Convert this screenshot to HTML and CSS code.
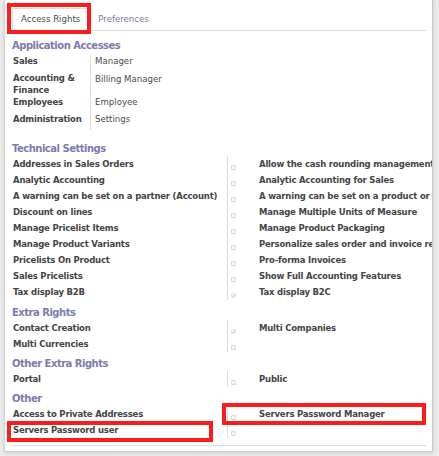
FILE: index.html
```html
<!DOCTYPE html>
<html>
<head>
<meta charset="utf-8">
<title>Access Rights</title>
<link rel="stylesheet" href="styles.css">
</head>
<body>
<div class="sheet">
  <div class="notebook">
    <ul class="tabs">
      <li class="tab active">Access Rights</li>
      <li class="tab">Preferences</li>
    </ul>
    <div class="pane">
      <div class="sep-title app-title">Application Accesses</div>
      <div class="app-group">
        <div class="app-row"><div class="app-label">Sales</div><div class="app-value">Manager</div></div>
        <div class="app-row tight"><div class="app-label">Accounting &amp; Finance</div><div class="app-value shifted">Billing Manager</div></div>
        <div class="app-row"><div class="app-label">Employees</div><div class="app-value">Employee</div></div>
        <div class="app-row"><div class="app-label">Administration</div><div class="app-value">Settings</div></div>
      </div>

      <div class="sep-title tech-title">Technical Settings</div>
      <div class="groups">
        <div class="group left">
          <div class="row"><div class="lbl">Addresses in Sales Orders</div><div class="fld"><span class="chk"></span></div></div>
          <div class="row"><div class="lbl">Analytic Accounting</div><div class="fld"><span class="chk"></span></div></div>
          <div class="row"><div class="lbl">A warning can be set on a partner (Account)</div><div class="fld"><span class="chk"></span></div></div>
          <div class="row"><div class="lbl">Discount on lines</div><div class="fld"><span class="chk"></span></div></div>
          <div class="row"><div class="lbl">Manage Pricelist Items</div><div class="fld"><span class="chk"></span></div></div>
          <div class="row"><div class="lbl">Manage Product Variants</div><div class="fld"><span class="chk"></span></div></div>
          <div class="row"><div class="lbl">Pricelists On Product</div><div class="fld"><span class="chk"></span></div></div>
          <div class="row"><div class="lbl">Sales Pricelists</div><div class="fld"><span class="chk"></span></div></div>
          <div class="row"><div class="lbl">Tax display B2B</div><div class="fld"><span class="chk checked"><svg viewBox="0 0 5 5" width="5" height="5"><polyline points="1,2.6 2.1,3.7 4,1.3" fill="none" stroke="#b5b5b5" stroke-width="0.9"/></svg></span></div></div>
        </div>
        <div class="group right">
          <div class="row"><div class="lbl">Allow the cash rounding management</div><div class="fld"><span class="chk"></span></div></div>
          <div class="row"><div class="lbl">Analytic Accounting for Sales</div><div class="fld"><span class="chk"></span></div></div>
          <div class="row"><div class="lbl">A warning can be set on a product or a customer (Stock)</div><div class="fld"><span class="chk"></span></div></div>
          <div class="row"><div class="lbl">Manage Multiple Units of Measure</div><div class="fld"><span class="chk"></span></div></div>
          <div class="row"><div class="lbl">Manage Product Packaging</div><div class="fld"><span class="chk"></span></div></div>
          <div class="row"><div class="lbl">Personalize sales order and invoice report</div><div class="fld"><span class="chk"></span></div></div>
          <div class="row"><div class="lbl">Pro-forma Invoices</div><div class="fld"><span class="chk"></span></div></div>
          <div class="row"><div class="lbl">Show Full Accounting Features</div><div class="fld"><span class="chk"></span></div></div>
          <div class="row"><div class="lbl">Tax display B2C</div><div class="fld"><span class="chk"></span></div></div>
        </div>
      </div>

      <div class="sep-title extra-title">Extra Rights</div>
      <div class="groups">
        <div class="group left">
          <div class="row"><div class="lbl">Contact Creation</div><div class="fld"><span class="chk checked"><svg viewBox="0 0 5 5" width="5" height="5"><polyline points="1,2.6 2.1,3.7 4,1.3" fill="none" stroke="#b5b5b5" stroke-width="0.9"/></svg></span></div></div>
          <div class="row"><div class="lbl">Multi Currencies</div><div class="fld"><span class="chk"></span></div></div>
        </div>
        <div class="group right">
          <div class="row"><div class="lbl">Multi Companies</div><div class="fld"><span class="chk"></span></div></div>
        </div>
      </div>

      <div class="sep-title">Other Extra Rights</div>
      <div class="groups">
        <div class="group left">
          <div class="row"><div class="lbl">Portal</div><div class="fld"><span class="chk"></span></div></div>
        </div>
        <div class="group right">
          <div class="row"><div class="lbl">Public</div><div class="fld"><span class="chk"></span></div></div>
        </div>
      </div>

      <div class="sep-title">Other</div>
      <div class="groups">
        <div class="group left">
          <div class="row"><div class="lbl">Access to Private Addresses</div><div class="fld"><span class="chk"></span></div></div>
          <div class="row"><div class="lbl">Servers Password user</div><div class="fld"><span class="chk"></span></div></div>
        </div>
        <div class="group right">
          <div class="row"><div class="lbl">Servers Password Manager</div><div class="fld"><span class="chk"></span></div></div>
        </div>
      </div>
      <div class="bottom-line"></div>
    </div>
  </div>
</div>
<div class="mark mark-tab"></div>
<div class="mark mark-manager"></div>
<div class="mark mark-user"></div>
</body>
</html>
```
FILE: styles.css
```css
html, body {
  margin: 0;
  padding: 0;
}
body {
  position: relative;
  width: 439px;
  height: 456px;
  overflow: hidden;
  background: #ebebeb;
  font-family: "DejaVu Sans", "Liberation Sans", sans-serif;
  font-size: 8.6px;
  color: #4c4c4c;
}
.sheet {
  box-sizing: border-box;
  margin-left: 4px;
  width: 429px;
  height: 452px;
  padding: 0 6px 0 7px;
  background: #fff;
  border-left: 1px solid #d4d4d4;
  border-right: 1px solid #c6c6c6;
  border-bottom: 1px solid #cdcdcd;
  box-shadow: 0 1px 4px rgba(0, 0, 0, 0.12);
  overflow: hidden;
}
.tabs {
  display: flex;
  margin: 0;
  padding: 8px 0 0 0;
  list-style: none;
  border-bottom: 1px solid #dddddd;
}
.tab {
  box-sizing: border-box;
  height: 23px;
  margin-bottom: -1px;
  padding: 0 8px;
  line-height: 21px;
  border: 1px solid transparent;
  border-bottom: 0;
  color: #7c7bad;
  white-space: nowrap;
}
.tab.active {
  border-color: #dddddd;
  background: #fff;
  color: #4c4c4c;
}
.sep-title {
  margin: 6px 0 1px 0;
  line-height: 12px;
  font-size: 10px;
  font-weight: bold;
  letter-spacing: -0.5px;
  color: #7c7bad;
  white-space: nowrap;
}
.app-title {
  margin-top: 9px;
  margin-bottom: 3px;
}
.tech-title {
  margin-top: 13px;
}
.extra-title {
  margin-top: 7px;
}
.app-row {
  display: flex;
}
.app-label {
  box-sizing: border-box;
  width: 79px;
  flex: none;
  padding: 0 0 5px 1px;
  line-height: 12px;
  border-right: 1px solid #dddddd;
  font-weight: bold;
  font-size: 8.5px;
  letter-spacing: -0.2px;
  color: #444;
}
.app-value {
  padding: 0 0 5px 4px;
  line-height: 12px;
}
.app-row.tight .app-label,
.app-row.tight .app-value {
  padding-bottom: 0;
}
.app-value.shifted {
  padding-top: 1px;
}
.groups {
  display: flex;
}
.group.left {
  width: 246px;
  flex: none;
}
.group.right {
  flex: 1;
  min-width: 0;
}
.row {
  display: flex;
  height: 16px;
}
.lbl {
  box-sizing: border-box;
  width: 216px;
  flex: none;
  padding-left: 1px;
  line-height: 16px;
  border-right: 1px solid #dddddd;
  font-weight: bold;
  font-size: 8.5px;
  letter-spacing: -0.2px;
  color: #444;
  white-space: nowrap;
}
.group.right .lbl {
  width: 260px;
}
.fld {
  padding-left: 3px;
}
.chk {
  display: block;
  box-sizing: border-box;
  width: 5px;
  height: 5px;
  margin-top: 9px;
  border: 1px solid #dadada;
  border-radius: 1px;
  background: #f6f6f6;
}
.chk.checked {
  border-color: #e6e6e6;
  background: #fbfbfb;
}
.chk svg {
  display: block;
  margin: -1px 0 0 -1px;
}
.bottom-line {
  margin-top: 7px;
  height: 1px;
  background: #dddddd;
}
.mark {
  position: absolute;
  box-sizing: border-box;
  border: 4px solid #fd1c1c;
}
.mark-tab {
  left: 7px;
  top: 3px;
  width: 84px;
  height: 31px;
}
.mark-manager {
  left: 222px;
  top: 403px;
  width: 204px;
  height: 22px;
}
.mark-user {
  left: 7px;
  top: 421px;
  width: 206px;
  height: 21px;
}
```
